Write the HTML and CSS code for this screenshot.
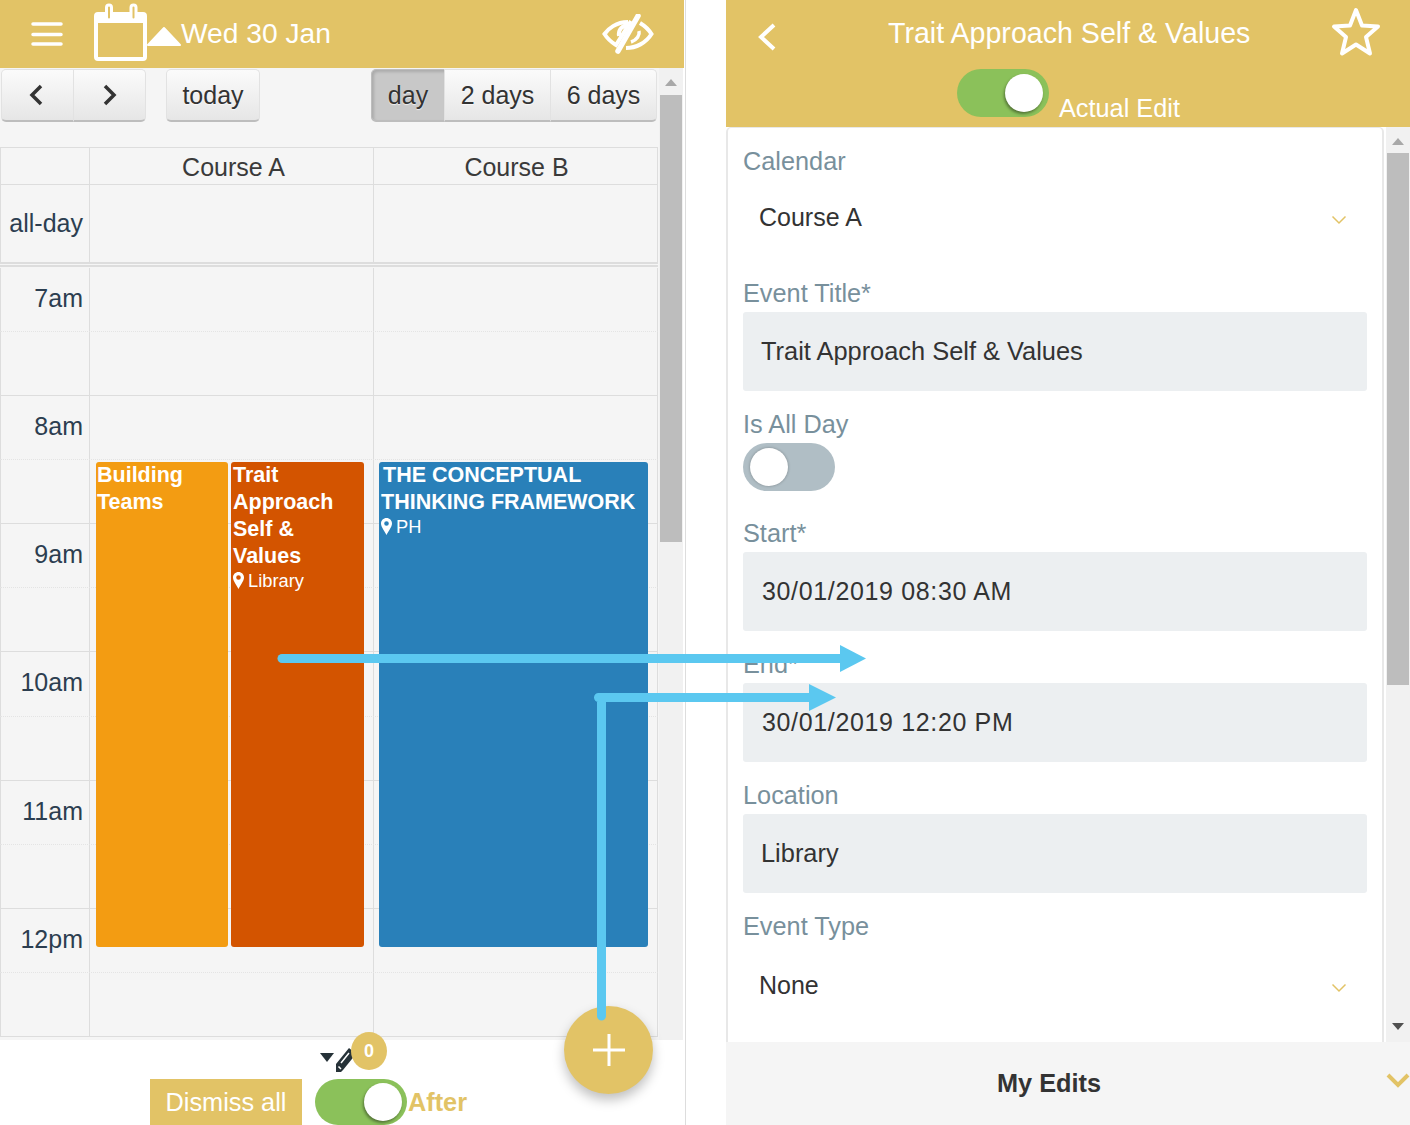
FILE: index.html

```html
<!DOCTYPE html>
<html lang="en">
<head>
    <meta charset="UTF-8">
    <title>Calendar</title>
    <link rel="stylesheet" href="styles.css">
</head>
<body>
<div class="screen left">
    <div class="topbar">
        <svg class="ico-menu" width="32" height="24" viewBox="0 0 32 24"><path d="M2 2H30M2 12.500H30M2 22H30" stroke="#fff" stroke-width="3.500" stroke-linecap="round"/></svg>
        <svg class="ico-cal" width="88" height="60" viewBox="0 0 88 60">
            <rect x="2" y="11" width="49" height="45" rx="2" fill="none" stroke="#fff" stroke-width="4"/>
            <rect x="2" y="11" width="49" height="9" fill="#fff"/>
            <rect x="12.500" y="2" width="5" height="15" rx="2.500" fill="#e2c366" stroke="#fff" stroke-width="3"/>
            <rect x="37" y="2" width="5" height="15" rx="2.500" fill="#e2c366" stroke="#fff" stroke-width="3"/>
            <path d="M54 42L70 25L86 42Z" fill="#fff" stroke="#fff" stroke-width="2" stroke-linejoin="round"/>
        </svg>
        <span class="topbar-date">Wed 30 Jan</span>
        <svg class="ico-eye" width="52" height="40" viewBox="0 0 52 40">
            <path d="M26 8C14 8 6 15 2.500 20C5 24 9 28 14 31L29 7" fill="none" stroke="#fff" stroke-width="4"/>
            <path d="M38 9C43 12 47 16 49.500 20C44 29 34 34 24 34" fill="none" stroke="#fff" stroke-width="4"/>
            <path d="M36 2L16 37" stroke="#fff" stroke-width="5.500" stroke-linecap="round"/>
            <path d="M17 22C16 16 20 11 27 11" fill="none" stroke="#fff" stroke-width="4"/>
            <path d="M37 17C38 21 35 26 29 28" fill="none" stroke="#fff" stroke-width="3.500"/>
        </svg>
    </div>
    <div class="cal-wrap">
        <div class="cal">
            <div class="toolbar">
                <div class="btn-group">
                    <button class="btn btn-arrow"><svg class="ico-prev" width="16" height="24" viewBox="0 0 16 24"><path d="M13 3L4 12L13 21" fill="none" stroke="#333" stroke-width="3.500"/></svg></button>
                    <button class="btn btn-arrow"><svg width="16" height="24" viewBox="0 0 16 24"><path d="M3 3L12 12L3 21" fill="none" stroke="#333" stroke-width="3.500"/></svg></button>
                </div>
                <button class="btn btn-today">today</button>
                <div class="btn-group views">
                    <button class="btn btn-day active">day</button>
                    <button class="btn btn-days">2 days</button>
                    <button class="btn btn-days">6 days</button>
                </div>
            </div>
            <div class="row head">
                <div class="cell"></div>
                <div class="cell course-a">Course A</div>
                <div class="cell course-b">Course B</div>
            </div>
            <div class="row allday">
                <div class="cell time">all-day</div>
                <div class="cell"></div>
                <div class="cell"></div>
            </div>
            <div class="divider"></div>
            <div class="timegrid">
                <div class="row slot"><div class="cell time">7am</div><div class="cell"></div><div class="cell"></div></div>
                <div class="row slot solid"><div class="cell time"></div><div class="cell"></div><div class="cell"></div></div>
                <div class="row slot"><div class="cell time">8am</div><div class="cell"></div><div class="cell"></div></div>
                <div class="row slot solid"><div class="cell time"></div><div class="cell"></div><div class="cell"></div></div>
                <div class="row slot"><div class="cell time">9am</div><div class="cell"></div><div class="cell"></div></div>
                <div class="row slot solid"><div class="cell time"></div><div class="cell"></div><div class="cell"></div></div>
                <div class="row slot"><div class="cell time">10am</div><div class="cell"></div><div class="cell"></div></div>
                <div class="row slot solid"><div class="cell time"></div><div class="cell"></div><div class="cell"></div></div>
                <div class="row slot"><div class="cell time">11am</div><div class="cell"></div><div class="cell"></div></div>
                <div class="row slot solid"><div class="cell time"></div><div class="cell"></div><div class="cell"></div></div>
                <div class="row slot"><div class="cell time">12pm</div><div class="cell"></div><div class="cell"></div></div>
                <div class="row slot solid"><div class="cell time"></div><div class="cell"></div><div class="cell"></div></div>

                <div class="event ev-orange">
                    <div class="ev-title">Building Teams</div>
                </div>
                <div class="event ev-red">
                    <div class="ev-title">Trait Approach Self &amp; Values</div>
                    <div class="ev-place"><svg width="11" height="17" viewBox="0 0 11 17"><path fill-rule="evenodd" d="M5.500 0C2.400 0 0 2.400 0 5.500C0 9 3.500 13 5.500 17C7.500 13 11 9 11 5.500C11 2.400 8.600 0 5.500 0ZM5.500 3.200A2.300 2.300 0 1 1 5.500 7.800A2.300 2.300 0 1 1 5.500 3.200Z" fill="#fff"/></svg>Library</div>
                </div>
                <div class="event ev-blue">
                    <div class="ev-title">THE CONCEPTUAL THINKING FRAMEWORK</div>
                    <div class="ev-place"><svg width="11" height="17" viewBox="0 0 11 17"><path fill-rule="evenodd" d="M5.500 0C2.400 0 0 2.400 0 5.500C0 9 3.500 13 5.500 17C7.500 13 11 9 11 5.500C11 2.400 8.600 0 5.500 0ZM5.500 3.200A2.300 2.300 0 1 1 5.500 7.800A2.300 2.300 0 1 1 5.500 3.200Z" fill="#fff"/></svg>PH</div>
                </div>
            </div>
        </div>
        <div class="scrollbar cal-scroll">
            <div class="sb-up"></div>
            <div class="sb-thumb"></div>
        </div>
    </div>
    <div class="footer">
        <div class="edits-row">
            <span class="caret"></span>
            <svg class="ico-pencil" width="22" height="26" viewBox="0 0 22 26"><path d="M1 25V17L14 1L21 7L8 23L6 25Z" fill="#263238"/><path d="M3.500 19.500L6 22M6 16L14 6" stroke="#fff" stroke-width="1.500"/></svg>
            <span class="badge">0</span>
        </div>
        <div class="actions-row">
            <button class="dismiss">Dismiss all</button>
            <div class="toggle on bordered"><span class="knob"></span></div>
            <span class="after">After</span>
        </div>
    </div>
    <div class="fab"><svg width="32" height="32" viewBox="0 0 32 32"><path d="M16 0V32M0 16H32" stroke="#fff" stroke-width="3"/></svg></div>
</div>

<div class="screen right">
    <div class="detail-head">
        <div class="detail-title-row">
            <svg class="ico-back" width="20" height="30" viewBox="0 0 20 30"><path d="M17 3L4 15L17 27" fill="none" stroke="#fff" stroke-width="4"/></svg>
            <span class="detail-title">Trait Approach Self &amp; Values</span>
            <svg class="ico-star" width="50" height="50" viewBox="0 0 50 50"><path d="M25 3L31 18.500L47 19.500L35 30L39 46.500L25 37.500L11 46.500L15 30L3 19.500L19 18.500Z" fill="none" stroke="#fff" stroke-width="4" stroke-linejoin="round"/></svg>
        </div>
        <div class="detail-toggle-row">
            <div class="toggle on"><span class="knob"></span></div>
            <span class="toggle-label">Actual Edit</span>
        </div>
    </div>
    <div class="detail-body">
        <div class="form">
            <div class="label">Calendar</div>
            <div class="select first">Course A<svg width="16" height="10" viewBox="0 0 16 10"><path d="M1.500 1.500L8 8L14.500 1.500" fill="none" stroke="#e2c366" stroke-width="1.500"/></svg></div>
            <div class="label">Event Title*</div>
            <div class="input title-input">Trait Approach Self &amp; Values</div>
            <div class="label">Is All Day</div>
            <div class="toggle off"><span class="knob"></span></div>
            <div class="label after-toggle">Start*</div>
            <div class="input date">30/01/2019 08:30 AM</div>
            <div class="label">End*</div>
            <div class="input date">30/01/2019 12:20 PM</div>
            <div class="label">Location</div>
            <div class="input title-input">Library</div>
            <div class="label">Event Type</div>
            <div class="select">None<svg width="16" height="10" viewBox="0 0 16 10"><path d="M1.500 1.500L8 8L14.500 1.500" fill="none" stroke="#e2c366" stroke-width="1.500"/></svg></div>
        </div>
        <div class="scrollbar form-scroll">
            <div class="sb-up"></div>
            <div class="sb-thumb"></div>
            <div class="sb-down"></div>
        </div>
    </div>
    <div class="my-edits">
        <span>My Edits</span>
        <svg class="ico-chev" width="24" height="16" viewBox="0 0 24 16"><path d="M2 2L12 12L22 2" fill="none" stroke="#e2c366" stroke-width="4"/></svg>
    </div>
</div>

<!-- arrows drawn on top of both screens -->
<svg class="arrows" width="1410" height="1125" viewBox="0 0 1410 1125">
    <path d="M282 658.500H842" stroke="#5bc8f0" stroke-width="9" stroke-linecap="round"/>
    <path d="M840 645L866 658.500L840 672Z" fill="#5bc8f0"/>
    <path d="M601.500 1016V697.500M598.500 697.500H812" fill="none" stroke="#5bc8f0" stroke-width="9" stroke-linecap="round"/>
    <path d="M809 684L836 697.500L809 711Z" fill="#5bc8f0"/>
</svg>
</body>
</html>
```

FILE: styles.css

```css
* { box-sizing: border-box; }
html, body { margin: 0; height: 1125px; overflow: hidden; }
body { display: flex; position: relative; background: #fff; font-family: "Liberation Sans", Arial, sans-serif; color: #333; }
button { font-family: inherit; }

.screen { height: 1125px; position: relative; display: flex; flex-direction: column; }
.left { width: 686px; margin-right: 40px; border-right: 1px solid #ddd; }
.right { width: 684px; }

/* left header */
.topbar { height: 68px; margin-right: 1px; background: #e2c366; display: flex; align-items: center; color: #fff; padding-left: 31px; flex-shrink: 0; }
.ico-menu { margin-right: 31px; }
.ico-cal { margin: -2px -1px 0 0; }
.topbar-date { font-size: 28.200px; margin-top: -1px; }
.ico-eye { margin: -1px 30px 0 auto; }

.cal-wrap { flex: 1; display: flex; min-height: 0; }
.cal { width: 659px; background: #f5f5f5; overflow: hidden; }

/* toolbar */
.toolbar { height: 79px; padding: 1px 2px 0 1px; display: flex; align-items: flex-start; }
.btn-group { display: flex; }
.btn { height: 53px; padding: 0; font-size: 25px; color: #333; background: linear-gradient(#fbfbfb, #e6e6e6); border: 1px solid #e2e2e2; border-bottom: 2px solid #bdbdbd; text-shadow: 0 1px 1px rgba(255, 255, 255, .75); margin-left: -1px; }
.btn-group .btn:first-child { border-radius: 5px 0 0 5px; margin-left: 0; }
.btn-group .btn:last-child { border-radius: 0 5px 5px 0; }
.btn-arrow { width: 73px; display: flex; align-items: center; justify-content: center; }
.ico-prev { margin-left: -4px; }
.btn-today { width: 94px; margin-left: 20px; border-radius: 5px; }
.views { margin-left: auto; }
.btn-day { width: 74px; }
.btn-days { width: 107px; }
.btn.active { background: #c8c8c8; border-color: #bdbdbd; box-shadow: inset 2px 2px 3px rgba(0, 0, 0, .15); }

/* calendar grid */
.row { display: grid; grid-template-columns: 89px 284px 284px; width: 658px; border-right: 1px solid #ddd; }
.cell { border-left: 1px solid #ddd; }
.head { height: 38px; border-top: 1px solid #ddd; border-bottom: 1px solid #ddd; }
.head .cell { font-size: 25px; line-height: 38px; text-align: center; color: #3a3a3a; }
.head .course-a { padding-left: 4px; }
.head .course-b { padding-left: 2px; }
.allday { height: 77px; }
.time { font-size: 25px; color: #2c3e50; text-align: right; padding-right: 6px; }
.allday .time { line-height: 76px; }
.divider { height: 5px; width: 658px; border-top: 2px solid #ddd; border-bottom: 2px solid #ddd; background: #f5f5f5; }
.timegrid { position: relative; padding-top: 1px; }
.slot { height: 64.080px; border-bottom: 1px dotted #e4e4e4; }
.slot.solid { border-bottom: 1px solid #ddd; }
.slot .time { line-height: 60px; }

.event { position: absolute; top: 195px; height: 485px; border-radius: 3px; color: #fff; padding: 0 2px; }
.ev-title { font-size: 21.500px; font-weight: bold; line-height: 26.900px; }
.ev-place { font-size: 18.300px; line-height: 24px; display: flex; align-items: center; gap: 4px; margin-top: -1px; }
.ev-orange { left: 96px; width: 132px; background: #f39c12; padding-left: 1px; }
.ev-red { left: 231px; width: 133px; background: #d35400; }
.ev-blue { left: 379px; width: 269px; background: #2980b9; }
.ev-blue .ev-title { text-indent: 2px; }

/* scrollbars */
.scrollbar { width: 24px; background: #f1f1f1; position: relative; }
.sb-thumb { position: absolute; left: 1px; right: 1px; background: #bdbdbd; }
.sb-up { position: absolute; left: 6px; top: 11px; border: 6px solid transparent; border-top: 0; border-bottom: 7px solid #a8a8a8; }
.sb-down { position: absolute; left: 6px; bottom: 12px; border: 6px solid transparent; border-bottom: 0; border-top: 7px solid #505050; }
.cal-scroll .sb-thumb { top: 27px; height: 447px; }
.form-scroll { margin-left: 2px; }
.form-scroll .sb-thumb { top: 26px; height: 532px; }

/* left footer */
.footer { height: 85px; background: #fff; flex-shrink: 0; }
.edits-row { height: 39px; padding: 7px 0 0 320px; display: flex; align-items: flex-start; position: relative; }
.caret { width: 0; height: 0; margin-top: 6px; border: 7px solid transparent; border-bottom: 0; border-top: 9px solid #263238; }
.ico-pencil { margin-left: 1px; }
.badge { position: absolute; left: 351px; top: -8px; width: 36px; height: 38px; border-radius: 50%; background: #e2c366; color: #fff; font-size: 18px; font-weight: bold; text-align: center; line-height: 38px; }
.actions-row { display: flex; padding-left: 150px; align-items: flex-start; }
.dismiss { width: 152px; height: 46px; border: 0; background: #e2c366; color: #fff; font-size: 25.300px; padding: 0; margin-right: 13px; }
.after { color: #e2c366; font-size: 25.300px; font-weight: bold; line-height: 46px; margin-left: 1px; }
.fab { position: absolute; left: 564px; top: 1006px; width: 89px; height: 88px; border-radius: 50%; background: #e2c366; box-shadow: 0 6px 12px rgba(0, 0, 0, .25); display: flex; align-items: center; justify-content: center; }

/* toggles */
.toggle { width: 92px; height: 48px; border-radius: 24px; position: relative; flex-shrink: 0; }
.knob { position: absolute; top: 5px; width: 38px; height: 38px; border-radius: 50%; background: #fff; }
.toggle.on { background: #8bc15a; }
.toggle.on .knob { right: 6px; box-shadow: -1px 2px 3px rgba(0, 0, 0, .4); }
.toggle.off { background: #b0bec5; }
.toggle.off .knob { left: 7px; box-shadow: 0 0 3px rgba(0, 0, 0, .3); }
.toggle.bordered { height: 46px; }
.toggle.bordered .knob { top: 4px; right: 5px; }

/* right header */
.detail-head { height: 127px; background: #e2c366; color: #fff; flex-shrink: 0; }
.detail-title-row { height: 69px; display: flex; align-items: center; position: relative; padding-left: 31px; }
.detail-title { position: absolute; left: 162px; top: 17px; font-size: 28.600px; }
.ico-back { margin-top: 4px; }
.ico-star { margin: -6px 29px 0 auto; }
.detail-toggle-row { display: flex; padding-left: 231px; }
.toggle-label { font-size: 25.300px; margin: 24px 0 0 10px; line-height: 30px; }

/* form */
.detail-body { height: 915px; display: flex; flex-shrink: 0; }
.form { width: 658px; padding: 14px 15px 0 15px; background: #fff; border: 1px solid #e8e8e8; border-width: 1px 2px 0 2px; border-radius: 5px 5px 0 0; overflow: hidden; }
.label { font-size: 25.300px; line-height: 38px; height: 38px; color: #78909c; }
.select { height: 79px; margin-bottom: 15px; padding: 2px 20px 0 16px; font-size: 25px; color: #333; display: flex; align-items: center; justify-content: space-between; }
.select.first { margin-top: -3px; margin-bottom: 18px; }
.select svg { margin-top: 4px; }
.input { height: 79px; margin-bottom: 14px; background: #eceff1; border-radius: 3px; padding-left: 18px; font-size: 25.400px; line-height: 78px; color: #333; }
.date { font-size: 25px; padding-left: 19px; letter-spacing: .65px; }
.after-toggle { margin-top: 23px; }

.my-edits { flex: 1; background: #f5f5f5; display: flex; align-items: center; justify-content: center; position: relative; font-size: 25.300px; font-weight: bold; padding-right: 38px; }
.ico-chev { position: absolute; left: 660px; top: 31px; }

.arrows { position: absolute; left: 0; top: 0; pointer-events: none; }
```
